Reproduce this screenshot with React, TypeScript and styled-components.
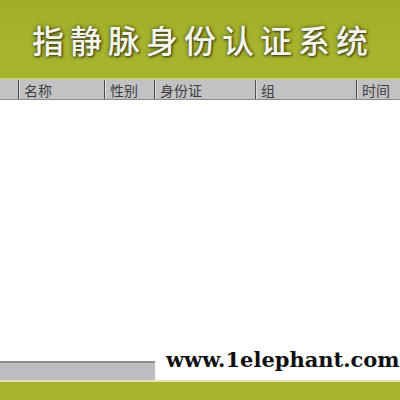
import React from "react";
import styled, { createGlobalStyle } from "styled-components";

const Global = createGlobalStyle`
  html, body { margin: 0; padding: 0; background: #fff; }
  body { width: 400px; height: 400px; overflow: hidden; }
`;

const Page = styled.div`
  width: 400px;
  height: 400px;
  display: flex;
  flex-direction: column;
  background: #fff;
  font-family: "Noto Sans CJK SC", "Noto Sans", sans-serif;
`;

const Banner = styled.div`
  height: 78px;
  background: linear-gradient(#a0ad27, #a7b42e 60%, #a5b22c);
  display: flex;
  align-items: center;
  justify-content: center;
  padding-left: 6px;
`;

const Title = styled.h1`
  margin: 0;
  color: #f6f6ee;
  font-size: 32px;
  font-weight: 500;
  letter-spacing: 6px;
  line-height: 1;
  text-shadow: 1px 1px 2px #3b3f10, 0 0 4px #4a4f18;
`;

const Rule = styled.div<{ $color: string; $h: number }>`
  height: ${(p) => p.$h}px;
  background: ${(p) => p.$color};
`;

const HeaderRow = styled.div`
  height: 19px;
  display: grid;
  grid-template-columns: 18px 86px 50px 101px 101px 1fr;
  background: #c2c2c5;
  border-bottom: 1px solid #8a8a8a;
`;

const HeadCell = styled.div<{ $first?: boolean }>`
  border-left: ${(p) => (p.$first ? "none" : "1px solid #4e4e4e")};
  box-shadow: ${(p) => (p.$first ? "none" : "inset 1px 0 #dcdcdc")};
  padding-left: 5px;
  font-size: 14px;
  line-height: 20px;
  color: #3e3e3e;
  white-space: nowrap;
  overflow: hidden;
`;

const Body = styled.div`
  flex: 1;
  background: #fff;
`;

const Footer = styled.div`
  height: 22px;
  display: flex;
  align-items: flex-end;
`;

const ScrollBar = styled.div`
  width: 155px;
  height: 19px;
  background: #bebec2;
  border-top: 2px solid #8e8e90;
  box-sizing: border-box;
`;

const Url = styled.div`
  flex: 1;
  align-self: stretch;
  display: flex;
  align-items: flex-start;
  padding-left: 11px;
  margin-top: -10px;
  font-family: "DejaVu Serif", "Liberation Serif", serif;
  font-weight: 700;
  font-size: 21px;
  line-height: 24px;
  color: #111;
  white-space: nowrap;
`;

const BottomBand = styled.div`
  height: 18px;
  background: #a7b32b;
`;

const columns = ["", "名称", "性别", "身份证", "组", "时间"];

export default function App() {
  return (
    <>
      <Global />
      <Page>
        <Banner>
          <Title>指静脉身份认证系统</Title>
        </Banner>
        <Rule $color="#c9cf93" $h={2} />
        <HeaderRow>
          {columns.map((c, i) => (
            <HeadCell key={i} $first={i === 0}>
              {c}
            </HeadCell>
          ))}
        </HeaderRow>
        <Body />
        <Footer>
          <ScrollBar />
          <Url>www.1elephant.com</Url>
        </Footer>
        <Rule $color="#dfe3bc" $h={2} />
        <BottomBand />
      </Page>
    </>
  );
}
